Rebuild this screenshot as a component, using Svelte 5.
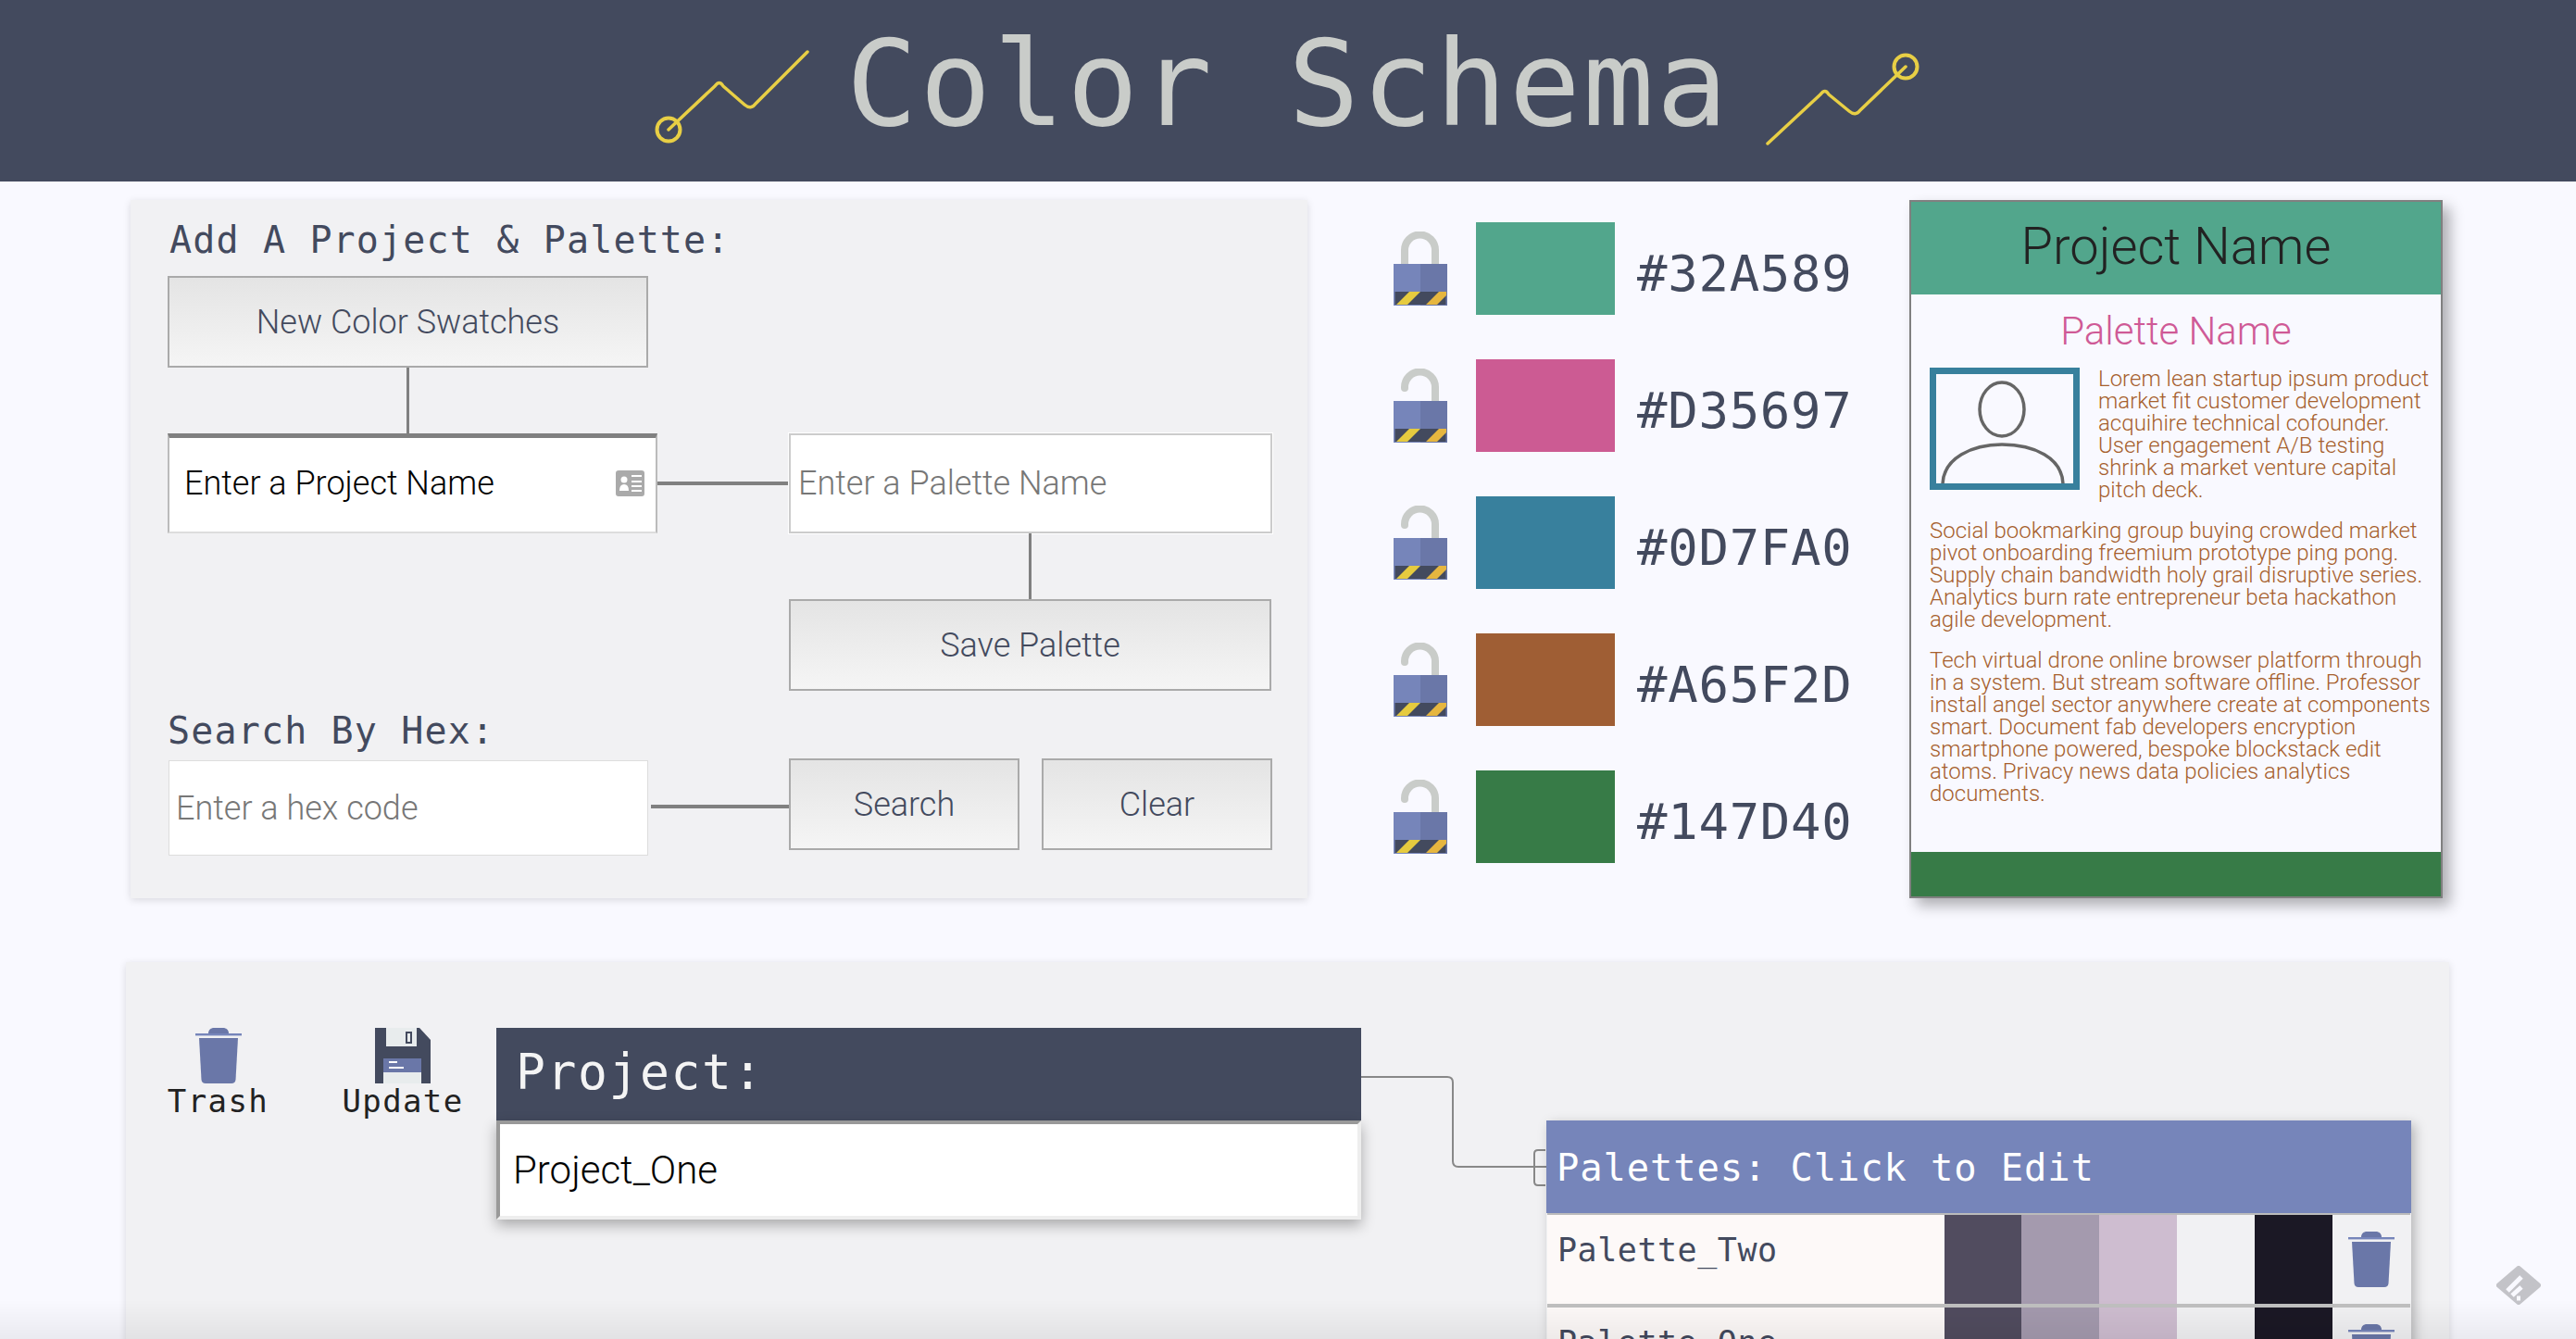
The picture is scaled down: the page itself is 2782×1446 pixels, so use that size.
<script>
	const swatches = [
		{ hex: '#32A589', color: '#52a68c', locked: true },
		{ hex: '#D35697', color: '#cc5b93', locked: false },
		{ hex: '#0D7FA0', color: '#38809d', locked: false },
		{ hex: '#A65F2D', color: '#9f5e34', locked: false },
		{ hex: '#147D40', color: '#377b47', locked: false }
	];
	const palettes = [
		{ name: 'Palette_Two', colors: ['#514c5f', '#a49aae', '#cebdd0', '#f1f1f3', '#1b1825'] },
		{ name: 'Palette_One', colors: ['#514c5f', '#a49aae', '#cebdd0', '#f1f1f3', '#1b1825'] }
	];
</script>

{#snippet trendLine(d, cx, cy)}
	<svg class="trend" viewBox="0 0 176 110" aria-hidden="true">
		<path d={d} fill="none" stroke="#e8cf45" stroke-width="3.500" stroke-linecap="round" stroke-linejoin="round" />
		<circle {cx} {cy} r="12.500" fill="none" stroke="#e8cf45" stroke-width="4" />
	</svg>
{/snippet}

{#snippet trash(cls)}
	<svg class={cls} viewBox="0 0 50 60" aria-hidden="true">
		<path d="M14 6C14 2 17 0 20 0H30C33 0 36 2 36 6Z" fill="#6a77a8" />
		<rect x="0" y="6" width="50" height="2.400" fill="#7685ba" />
		<path d="M4 11H46L43.500 56Q43 60 39 60H11Q7 60 6.500 56Z" fill="#6a77a8" />
	</svg>
{/snippet}

{#snippet lock(locked)}
	<svg class="lock" viewBox="0 0 58 80" aria-hidden="true">
		{#if locked}
			<path d="M12 37V20A16.500 16.500 0 0 1 45 20V37" fill="none" stroke="#c9ccc9" stroke-width="8" />
		{:else}
			<path d="M12 21V20A16.500 16.500 0 0 1 45 20V37" fill="none" stroke="#c9ccc9" stroke-width="8" stroke-linecap="round" />
		{/if}
		<rect x="0" y="35" width="29" height="45" fill="#7685ba" />
		<rect x="29" y="35" width="29" height="45" fill="#6a77a8" />
		<rect x="1.500" y="65" width="55" height="14" fill="#434a5e" />
		<path d="M3 79L17 65H29L15 79Z" fill="#e6cb3f" />
		<path d="M35 79L49 65H57V69L47 79Z" fill="#e6b63f" />
	</svg>
{/snippet}

<header class="top-bar">
	{@render trendLine('M24 97L74 50Q79 43 83 50L106 70Q113 76 118 69L174 13', 24, 97)}
	<h1>Color Schema</h1>
	{@render trendLine('M1 112L58 59Q63 52 67 59L89 77Q96 83 101 76L150 29', 150, 29)}
</header>

<main>
	<section class="upper">
		<div class="panel add-panel">
			<h2>Add A Project &amp; Palette:</h2>
			<div class="add-grid">
				<button class="btn new-btn">New Color Swatches</button>
				<div class="v-line first"></div>

				<div class="field project-field">
					<input class="project-input" placeholder="Enter a Project Name" />
					<svg class="id-icon" viewBox="0 0 31 28" aria-hidden="true">
						<rect width="31" height="28" rx="3" fill="#aaa" />
						<circle cx="9" cy="10" r="3.500" fill="#fff" />
						<path d="M4 22Q4 15 9 15Q14 15 14 22Z" fill="#fff" />
						<path d="M17 6H28M17 12H28M17 17H28M17 22H28" stroke="#fff" stroke-width="2" />
					</svg>
				</div>
				<div class="h-line link-line"></div>
				<input class="palette-input" placeholder="Enter a Palette Name" />

				<div class="v-line second"></div>
				<button class="btn save-btn">Save Palette</button>

				<h2 class="search-label">Search By Hex:</h2>
				<div class="search-left">
					<input class="hex-input" placeholder="Enter a hex code" />
					<div class="h-line"></div>
				</div>
				<div class="search-buttons">
					<button class="btn">Search</button>
					<button class="btn">Clear</button>
				</div>
			</div>
		</div>

		<div class="swatches">
			{#each swatches as s}
				<div class="swatch-row">
					{@render lock(s.locked)}
					<div class="swatch" style="background: {s.color}"></div>
					<span class="hex">{s.hex}</span>
				</div>
			{/each}
		</div>

		<article class="card">
			<div class="card-head">Project Name</div>
			<div class="card-body">
				<h3>Palette Name</h3>
				<svg class="avatar" viewBox="0 0 148 118" aria-hidden="true">
					<ellipse cx="71" cy="38" rx="24" ry="29" fill="none" stroke="#666" stroke-width="3.500" />
					<path d="M7 120C7 90 40 76 71 76C105 76 137 90 137 120" fill="none" stroke="#666" stroke-width="3.500" />
				</svg>
				<p>Lorem lean startup ipsum product market fit customer development acquihire technical cofounder. User engagement A/B testing shrink a market venture capital pitch deck.</p>
				<p class="clear">Social bookmarking group buying crowded market pivot onboarding freemium prototype ping pong. Supply chain bandwidth holy grail disruptive series. Analytics burn rate entrepreneur beta hackathon agile development.</p>
				<p>Tech virtual drone online browser platform through in a system. But stream software offline. Professor install angel sector anywhere create at components smart. Document fab developers encryption smartphone powered, bespoke blockstack edit atoms. Privacy news data policies analytics documents.</p>
			</div>
			<div class="card-foot"></div>
		</article>
	</section>

	<section class="panel lower">
		<div class="tool trash-tool">
			{@render trash('tool-icon')}
			<span>Trash</span>
		</div>
		<div class="tool update-tool">
			<svg class="tool-icon floppy" viewBox="0 0 60 60" aria-hidden="true">
				<path d="M0 0H48L60 13V60H0Z" fill="#434a5e" />
				<rect x="12" y="0" width="33" height="20" fill="#e8eced" />
				<rect x="33" y="4" width="7" height="13" fill="#434a5e" />
				<rect x="35" y="6" width="3" height="9" fill="#e8eced" />
				<rect x="9" y="33" width="41" height="27" fill="#e8eced" />
				<rect x="9" y="33" width="41" height="15" fill="#6a77a8" />
				<path d="M15 37H24M15 43H31" stroke="#fff" stroke-width="2" />
			</svg>
			<span>Update</span>
		</div>

		<div class="project">
			<div class="project-head">Project:</div>
			<input class="project-value" value="Project_One" />
		</div>

		<svg class="link" viewBox="0 0 200 200" aria-hidden="true">
			<path d="M0 53H93Q99 53 99 59V144Q99 150 105 150H200" fill="none" stroke="#888" stroke-width="2" />
			<path d="M199 132H191Q187 132 187 136V166Q187 170 191 170H199" fill="none" stroke="#888" stroke-width="2" />
		</svg>

		<div class="palettes">
			<div class="palettes-head">Palettes: Click to Edit</div>
			{#each palettes as p}
				<div class="palette-row">
					<span class="palette-name">{p.name}</span>
					{#each p.colors as c}
						<div class="chip" style="background: {c}"></div>
					{/each}
					<div class="chip trash-cell">{@render trash('row-trash')}</div>
				</div>
			{/each}
		</div>
	</section>
</main>

<div class="bottom-fade"></div>

<svg class="feed" viewBox="0 0 48 42" aria-hidden="true">
	<path d="M24 3L45 21L24 39L3 21Z" fill="#c3c3c8" stroke="#c3c3c8" stroke-width="6" stroke-linejoin="round" />
	<path d="M27 12L12 27M27 23L17 32" stroke="#f9f9ff" stroke-width="5" />
	<path d="M22 35L26 35" stroke="#f9f9ff" stroke-width="5" />
</svg>

<style>
	:global(body) {
		background: #f9f9ff;
		height: 100vh;
		overflow: hidden;
	}

	.top-bar {
		height: 196px;
		background: #434a5e;
		display: flex;
		align-items: center;
		justify-content: center;
		gap: 40px;
	}

	.trend {
		width: 176px;
		height: 110px;
		overflow: visible;
	}

	h1 {
		margin: -14px 0 0;
		font: 400 128px/1 'DejaVu Sans Mono', monospace;
		letter-spacing: 2.500px;
		color: #c9ccc9;
		white-space: pre;
	}

	h2 {
		margin: 0;
		font: 400 40px/1 'DejaVu Sans Mono', monospace;
		letter-spacing: 1.150px;
		color: #434a5e;
	}

	.upper {
		display: flex;
		padding: 20px 0 0 141px;
		height: 754px;
	}

	.panel {
		background: #f1f1f3;
		box-shadow: 0 2px 8px rgba(0, 0, 0, 0.13);
	}

	.add-panel {
		width: 1271px;
		box-sizing: border-box;
		padding: 23px 0 0 40px;
	}

	.add-panel > h2 {
		padding-left: 2px;
		height: 59px;
	}

	.add-grid {
		display: grid;
		grid-template-columns: 529px 142px 522px;
		grid-template-rows: 99px 71px 108px 71px 99px 73px 105px;
	}

	.btn {
		box-sizing: border-box;
		border: 2px solid #aaa;
		background: linear-gradient(#e4e4e4, #f5f5f5);
		font: 300 36px 'Roboto', sans-serif;
		color: #434a5e;
		padding: 0;
	}

	input {
		box-sizing: border-box;
		background: #fff;
		font: 300 36px 'Roboto', sans-serif;
		outline: none;
		min-width: 0;
	}

	.new-btn {
		width: 519px;
		grid-column: 1;
		grid-row: 1;
	}

	.v-line {
		width: 3px;
		background: #808080;
	}

	.v-line.first {
		grid-column: 1;
		grid-row: 2;
		margin-left: 258px;
	}

	.v-line.second {
		grid-column: 3;
		grid-row: 4;
		margin-left: 259px;
	}

	.field {
		position: relative;
		grid-column: 1;
		grid-row: 3;
		display: flex;
	}

	.project-input {
		width: 100%;
		border: 2px solid #bbb;
		border-top: 5px solid #808080;
		border-bottom-color: #ddd;
		padding: 0 60px 4px 16px;
		color: #000;
	}

	.project-input::placeholder {
		color: #000;
		opacity: 1;
	}

	.id-icon {
		position: absolute;
		right: 14px;
		top: 40px;
		width: 31px;
		height: 28px;
	}

	.h-line {
		height: 4px;
		background: #808080;
		align-self: center;
		flex: 1;
	}

	.link-line {
		grid-column: 2;
		grid-row: 3;
		width: 100%;
	}

	.palette-input {
		grid-column: 3;
		grid-row: 3;
		border: 2px solid #ccc;
		outline: 1px solid #fff;
		padding: 0 8px;
		color: #777;
	}

	input::placeholder {
		color: #777;
		opacity: 1;
	}

	.save-btn {
		grid-column: 3;
		grid-row: 5;
		width: 521px;
	}

	.search-label {
		grid-column: 1 / 3;
		grid-row: 6;
		align-self: end;
		padding-bottom: 10px;
	}

	.search-left {
		grid-column: 1 / 3;
		grid-row: 7;
		display: flex;
		gap: 3px;
	}

	.hex-input {
		width: 518px;
		margin: 2px 0 0 1px;
		border: 1px solid #ddd;
		padding: 0 7px;
	}

	.search-left .h-line {
		margin-top: -2px;
	}

	.search-buttons {
		grid-column: 3;
		grid-row: 7;
		display: grid;
		grid-template-columns: 249px 249px;
		gap: 24px;
		height: 99px;
	}

	.swatches {
		margin-left: 93px;
		width: 557px;
		padding-top: 24px;
		display: flex;
		flex-direction: column;
		gap: 48px;
	}

	.swatch-row {
		display: flex;
		align-items: center;
		height: 100px;
	}

	.lock {
		width: 58px;
		height: 80px;
		margin-right: 31px;
	}

	.swatch {
		width: 150px;
		height: 100px;
		margin-right: 24px;
	}

	.hex {
		font: 400 54px/1 'DejaVu Sans Mono', monospace;
		letter-spacing: 0.700px;
		color: #434a5e;
		margin-top: 12px;
	}

	.card {
		box-sizing: border-box;
		width: 576px;
		height: 754px;
		border: 2px solid #808080;
		box-shadow: 8px 8px 14px rgba(0, 0, 0, 0.3);
		display: flex;
		flex-direction: column;
		background: #f9f9ff;
	}

	.card-head {
		height: 100px;
		background: #52a68c;
		color: #222;
		font: 300 56px/97px 'Roboto', sans-serif;
		text-align: center;
	}

	.card-body {
		flex: 1;
		padding: 0 10px 0 20px;
		font: 300 24px/24px 'Roboto', sans-serif;
		color: #a65f2d;
		overflow: hidden;
	}

	h3 {
		margin: 0;
		padding-right: 10px;
		height: 79px;
		font: 300 42px/44px 'Roboto', sans-serif;
		padding-top: 18px;
		box-sizing: border-box;
		color: #cf5a96;
		text-align: center;
	}

	.avatar {
		float: left;
		box-sizing: border-box;
		width: 162px;
		height: 132px;
		border: 7px solid #38809d;
		margin-right: 20px;
	}

	.card-body p {
		margin: 0 0 20px;
	}

	.clear {
		clear: left;
	}

	.card-foot {
		height: 48px;
		background: #377b47;
	}

	.lower {
		position: relative;
		box-sizing: border-box;
		margin: 69px 0 0 136px;
		width: 2509px;
		height: 420px;
		padding: 71px 0 0 0;
		display: flex;
		align-items: flex-start;
	}

	.tool {
		display: flex;
		flex-direction: column;
		align-items: center;
		font: 400 34px/1 'DejaVu Sans Mono', monospace;
		letter-spacing: 1.400px;
		color: #222;
		gap: 2px;
	}

	.trash-tool {
		margin-left: 47px;
		width: 105px;
	}

	.update-tool {
		margin-left: 83px;
		width: 128px;
	}

	.tool-icon {
		width: 50px;
		height: 60px;
	}

	.tool-icon.floppy {
		width: 60px;
	}

	.project {
		margin-left: 37px;
		width: 934px;
		flex-shrink: 0;
		display: flex;
		flex-direction: column;
	}

	.project-head {
		height: 100px;
		background: #434a5e;
		color: #f4f4f4;
		font: 400 53px/96px 'DejaVu Sans Mono', monospace;
		letter-spacing: 1.600px;
		padding-left: 21px;
		box-sizing: border-box;
	}

	.project-value {
		height: 107px;
		border: 4px solid;
		border-color: #999 #eee #eee #999;
		padding: 0 14px;
		font-size: 42px;
		color: #000;
		box-shadow: 0 6px 14px rgba(0, 0, 0, 0.3);
	}

	.link {
		width: 200px;
		height: 200px;
		flex-shrink: 0;
	}

	.palettes {
		width: 934px;
		flex-shrink: 0;
		margin-top: 100px;
		box-shadow: 4px 4px 12px rgba(0, 0, 0, 0.25);
	}

	.palettes-head {
		height: 100px;
		background: #7685ba;
		color: #fff;
		font: 400 40.500px/102px 'DejaVu Sans Mono', monospace;
		letter-spacing: 0.870px;
		padding-left: 11px;
		box-sizing: border-box;
	}

	.palette-row {
		height: 102px;
		box-sizing: border-box;
		display: flex;
		background: #fdf9f8;
		border-top: 2px solid #bbb;
		border-bottom: 4px solid #c0c0c0;
		margin: 0 1px;
	}

	.palette-row + .palette-row {
		border-top: 0;
	}

	.palette-name {
		width: 429px;
		padding: 21px 0 0 11px;
		box-sizing: border-box;
		font: 400 35px/1 'DejaVu Sans Mono', monospace;
		letter-spacing: 0.530px;
		color: #434a5e;
	}

	.chip {
		width: 84px;
	}

	.trash-cell {
		background: #f1f1f3;
		display: flex;
		justify-content: center;
		padding-top: 18px;
	}

	.row-trash {
		width: 50px;
		height: 60px;
	}

	.bottom-fade {
		position: fixed;
		left: 0;
		right: 0;
		bottom: 0;
		height: 42px;
		background: linear-gradient(rgba(0, 0, 0, 0), rgba(0, 0, 0, 0.06));
	}

	.feed {
		position: fixed;
		left: 2696px;
		top: 1367px;
		width: 48px;
		height: 42px;
	}
</style>
